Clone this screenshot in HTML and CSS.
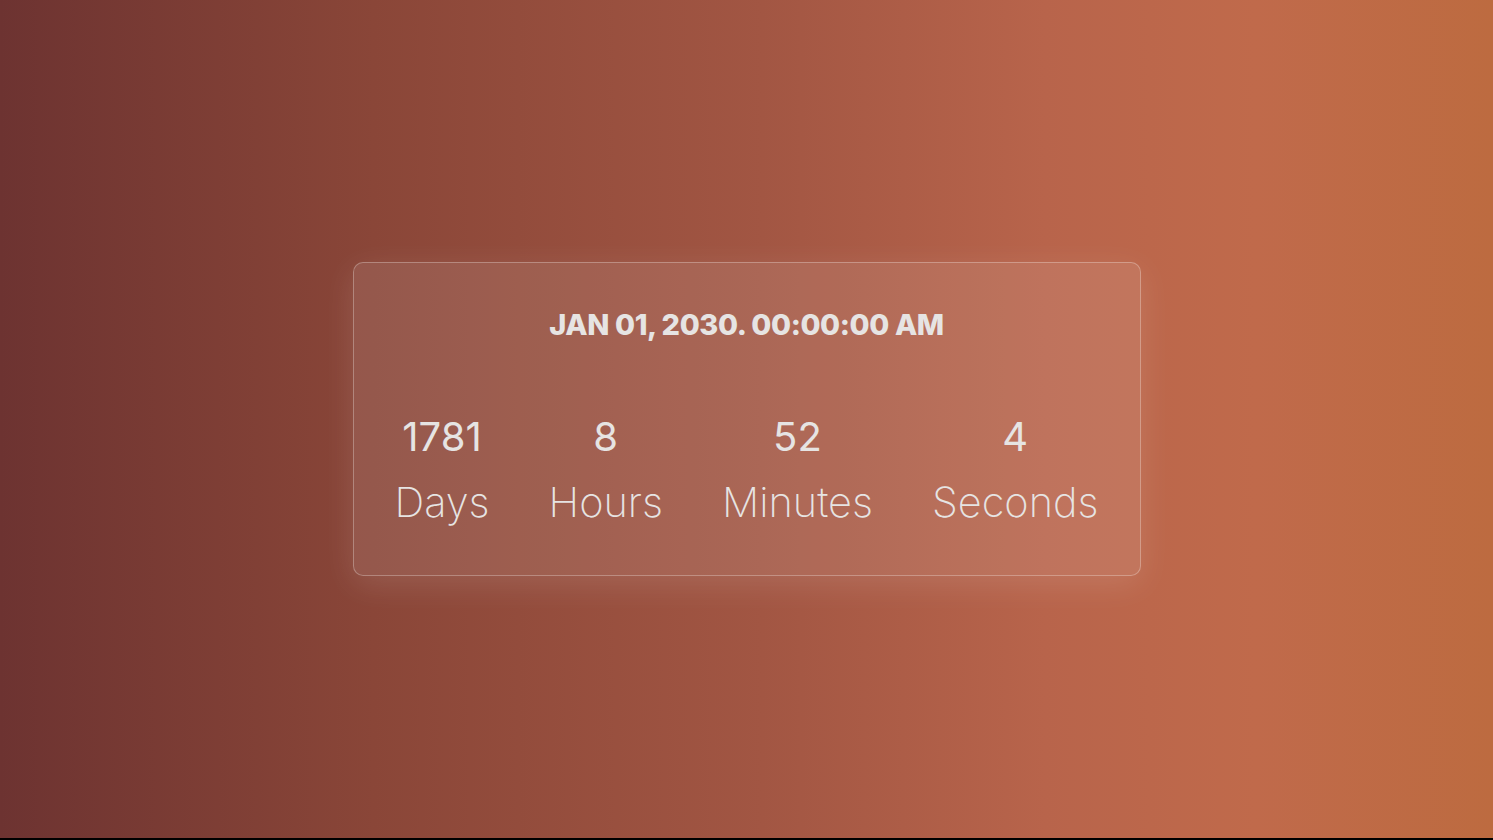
FILE: index.html
```html
<!DOCTYPE html>
<html lang="en">
<head>
<meta charset="utf-8">
<title>Countdown</title>
<link rel="stylesheet" href="styles.css">
</head>
<body>
<main class="page">
  <section class="card">
    <h1 class="target">JAN 01, 2030. 00:00:00 AM</h1>
    <div class="units">
      <div class="unit"><span class="num">1781</span><span class="label">Days</span></div>
      <div class="unit"><span class="num">8</span><span class="label">Hours</span></div>
      <div class="unit"><span class="num">52</span><span class="label">Minutes</span></div>
      <div class="unit"><span class="num">4</span><span class="label">Seconds</span></div>
    </div>
  </section>
</main>
</body>
</html>
```

FILE: styles.css
```css
html {
  background: #000;
}
body {
  margin: 0;
  font-family: Inter, "Open Sans", sans-serif;
}
.page {
  height: 838px;
  display: flex;
  align-items: center;
  justify-content: center;
  background: linear-gradient(to right, #6d3331 0%, #8a4638 25%, #a25643 51%, #b8644b 70%, #c06a4b 84%, #bd6b40 100%);
}
.card {
  box-sizing: border-box;
  width: 788px;
  height: 314px;
  border: 1px solid rgba(255, 255, 255, 0.28);
  border-radius: 10px;
  background: rgba(255, 255, 255, 0.1);
  box-shadow: 0 8px 32px rgba(255, 255, 255, 0.12);
  display: flex;
  flex-direction: column;
  align-items: center;
  padding-top: 45px;
  color: #e6e4e3;
}
.target {
  margin: 0;
  font-size: 29px;
  line-height: 34px;
  font-weight: 800;
  letter-spacing: -0.4px;
}
.units {
  display: flex;
  gap: 59px;
  margin-top: 72px;
}
.unit {
  display: flex;
  flex-direction: column;
  align-items: center;
}
.num {
  font-size: 40px;
  line-height: 46px;
  font-weight: 400;
}
.label {
  font-size: 41.5px;
  line-height: 48px;
  font-weight: 200;
  margin-top: 18px;
}
```
